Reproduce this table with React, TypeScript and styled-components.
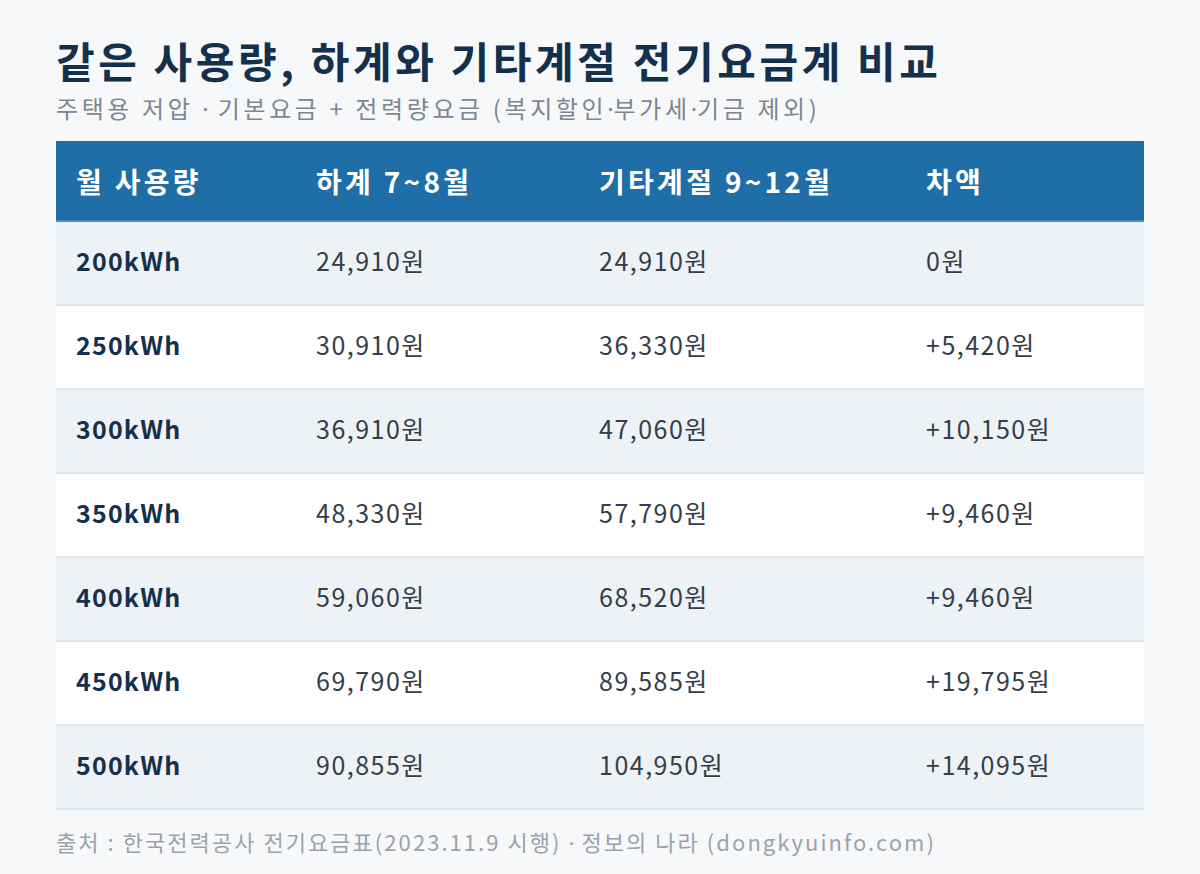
import React from "react";
import styled, { createGlobalStyle } from "styled-components";

const Global = createGlobalStyle`
  html, body { margin: 0; padding: 0; background: #f6f8fa; }
  body { font-family: "Noto Sans CJK KR", "Noto Sans", sans-serif; }
`;

const Page = styled.div`
  width: 1200px;
  height: 874px;
  box-sizing: border-box;
  padding: 31px 56px 0 56px;
  background: #f6f8fa;
`;

const Title = styled.h1`
  margin: 0;
  font-size: 42px;
  line-height: 58px;
  font-weight: 700;
  color: #15304d;
  letter-spacing: 3.6px;
  white-space: nowrap;
`;

const Subtitle = styled.p`
  margin: 4px 0 0 0;
  font-size: 24px;
  line-height: 30px;
  color: #7c8791;
  letter-spacing: 3.6px;
  white-space: nowrap;
`;

const Dot = styled.span`
  font-family: "Noto Sans", sans-serif;
  letter-spacing: 0;
`;

const Table = styled.table`
  margin-top: 17px;
  width: 1088px;
  border-collapse: collapse;
  table-layout: fixed;
`;

const HeadCell = styled.th<{ $w: number }>`
  width: ${(p) => p.$w}px;
  height: 80px;
  box-sizing: border-box;
  padding: 0 0 0 20px;
  text-align: left;
  background: #1f6ea7;
  color: #ffffff;
  font-size: 28px;
  font-weight: 700;
  letter-spacing: 3.3px;
  border-bottom: 2px solid #4f8fc0;
  white-space: nowrap;
`;

const Row = styled.tr<{ $alt: boolean }>`
  background: ${(p) => (p.$alt ? "#edf2f6" : "#ffffff")};
`;

const Cell = styled.td<{ $strong?: boolean }>`
  height: 84px;
  box-sizing: border-box;
  padding: 0 0 6px 20px;
  border-bottom: 2px solid #e1e7ec;
  font-size: 25px;
  letter-spacing: ${(p) => (p.$strong ? "1.2px" : "1.5px")};
  font-weight: ${(p) => (p.$strong ? 700 : 400)};
  color: ${(p) => (p.$strong ? "#16304c" : "#333e49")};
  white-space: nowrap;
`;

const Footer = styled.p`
  margin: 16px 0 0 0;
  font-size: 22px;
  line-height: 30px;
  letter-spacing: 2.05px;
  color: #9aa3ab;
  white-space: nowrap;
`;

const cols = [
  { label: "월 사용량", w: 240 },
  { label: "하계 7~8월", w: 283 },
  { label: "기타계절 9~12월", w: 327 },
  { label: "차액", w: 238 },
];

const rows = [
  ["200kWh", "24,910원", "24,910원", "0원"],
  ["250kWh", "30,910원", "36,330원", "+5,420원"],
  ["300kWh", "36,910원", "47,060원", "+10,150원"],
  ["350kWh", "48,330원", "57,790원", "+9,460원"],
  ["400kWh", "59,060원", "68,520원", "+9,460원"],
  ["450kWh", "69,790원", "89,585원", "+19,795원"],
  ["500kWh", "90,855원", "104,950원", "+14,095원"],
];

export default function App() {
  return (
    <>
      <Global />
      <Page>
        <Title>같은 사용량, 하계와 기타계절 전기요금계 비교</Title>
        <Subtitle>
          주택용 저압 <Dot>·</Dot> 기본요금 + 전력량요금 (복지할인<Dot>·</Dot>부가세<Dot>·</Dot>기금 제외)
        </Subtitle>
        <Table>
          <thead>
            <tr>
              {cols.map((c) => (
                <HeadCell key={c.label} $w={c.w}>
                  {c.label}
                </HeadCell>
              ))}
            </tr>
          </thead>
          <tbody>
            {rows.map((r, i) => (
              <Row key={r[0]} $alt={i % 2 === 0}>
                {r.map((v, j) => (
                  <Cell key={j} $strong={j === 0}>
                    {v}
                  </Cell>
                ))}
              </Row>
            ))}
          </tbody>
        </Table>
        <Footer>
          출처 : 한국전력공사 전기요금표(2023.11.9 시행) <Dot>·</Dot> 정보의 나라 (dongkyuinfo.com)
        </Footer>
      </Page>
    </>
  );
}
